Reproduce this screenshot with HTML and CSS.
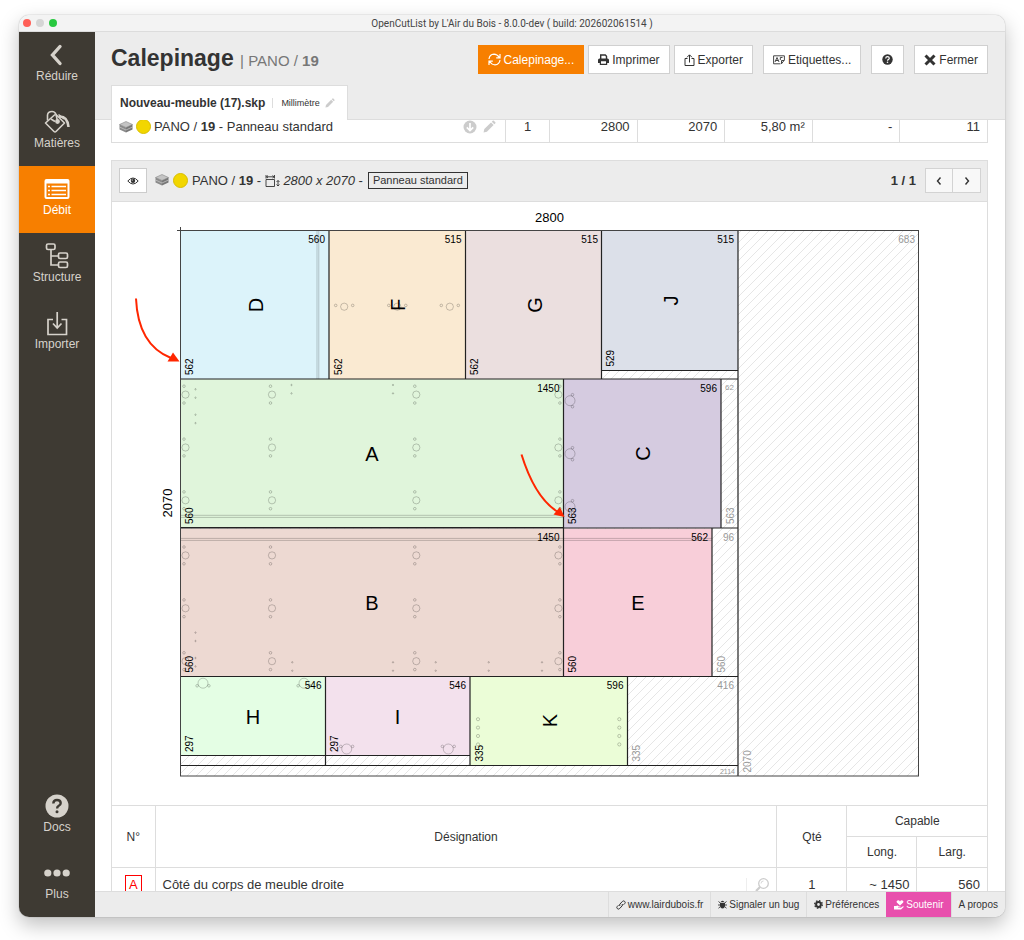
FILE: index.html
```html
<!DOCTYPE html>
<html lang="fr">
  <head>
    <meta charset="UTF-8">
    <meta name="viewport" content="width=device-width, initial-scale=1.0">
    <title>OpenCutList by L'Air du Bois</title>
    <link rel="stylesheet" href="styles.css">
  </head>
  <body>
    <!-- shared icons -->
    <svg class="sprite" aria-hidden="true">
      <symbol id="icon-board" viewBox="0 0 14 12">
        <path d="M7 0.500 13.500 3.500 7 6.500 0.500 3.500z" fill="#c4c4c4" stroke="#888" stroke-width="0.600"/>
        <path d="M0.500 3.500 7 6.500V11.500L0.500 8.500z" fill="#8a8a8a"/>
        <path d="M13.500 3.500 7 6.500V11.500L13.500 8.500z" fill="#777"/>
        <path d="M0.500 6 7 9 13.500 6" fill="none" stroke="#ccc" stroke-width="0.700"/>
      </symbol>
      <symbol id="icon-pencil" viewBox="0 0 12 12">
        <path d="M0.500 11.500 1.200 8.400 7.400 2.200 9.800 4.600 3.600 10.800zM8.100 1.500 9 0.600Q9.500 0.200 10 0.600L11.400 2Q11.800 2.500 11.400 3L10.500 3.900z" fill="currentColor"/>
      </symbol>
    </svg>

    <div class="window">
      <div class="titlebar">
        <div class="lights"><span class="red"></span><span class="grey"></span><span class="green"></span></div>
        <span class="titlebar-text">OpenCutList by L'Air du Bois - 8.0.0-dev ( build: 202602061514 )</span>
      </div>

      <div class="app">
        <nav class="sidebar">
          <a class="nav-item" href="#reduire">
            <svg width="26" height="26" viewBox="0 0 26 26"><path d="M16 4.500 8.500 13l7.500 8.500" fill="none" stroke="currentColor" stroke-width="3.400" stroke-linecap="round"/></svg>
            <span>Réduire</span>
          </a>
          <a class="nav-item" href="#matieres">
            <svg width="26" height="26" viewBox="0 0 26 26" fill="none" stroke="currentColor" stroke-width="1.600" stroke-linejoin="round">
              <path d="M11 5.500 1.500 14 10 22.500Q11 23.500 12 22.500L20.500 14 12 5.500"/>
              <path d="M3.500 11.500V6Q4 2.500 8 2.500 11 2.500 12 5.500L13.500 12"/>
              <path d="M7 10 11 12.500" />
              <circle cx="13.500" cy="12.500" r="1.600" fill="currentColor"/>
              <path d="M15 7.500Q23.500 7 24.500 18" stroke-width="2.600"/>
              <path d="M14.500 5.500 20 10"/>
            </svg>
            <span>Matières</span>
          </a>
          <a class="nav-item active" href="#debit">
            <svg width="26" height="26" viewBox="0 0 26 26">
              <path fill="currentColor" fill-rule="evenodd" d="M2.500 3h21Q25.500 3 25.500 5v16q0 2-2 2h-21q-2 0-2-2V5Q0.500 3 2.500 3zM2.500 7.500v13.500h21V7.500z"/>
              <path stroke="currentColor" stroke-width="1.600" d="M4 10.500h2M7.500 10.500h14.500M4 14.500h2M7.500 14.500h14.500M4 18.500h2M7.500 18.500h14.500"/>
            </svg>
            <span>Débit</span>
          </a>
          <a class="nav-item" href="#structure">
            <svg width="26" height="26" viewBox="0 0 26 26" fill="none" stroke="currentColor" stroke-width="1.700">
              <rect x="2.500" y="1" width="8.500" height="5.500" rx="1.500"/>
              <rect x="14.500" y="10" width="9" height="5.500" rx="1.500"/>
              <rect x="14.500" y="19" width="9" height="5.500" rx="1.500"/>
              <path d="M7 6.500V22h7.500M7 13h7.500"/>
            </svg>
            <span>Structure</span>
          </a>
          <a class="nav-item" href="#importer">
            <svg width="26" height="26" viewBox="0 0 26 26" fill="none" stroke="currentColor" stroke-width="1.700">
              <path d="M9 9.500H4V24.500H22.500V9.500H17.500M13.200 2V18M9 13.500 13.200 18 17.500 13.500"/>
            </svg>
            <span>Importer</span>
          </a>
          <div class="spacer"></div>
          <a class="nav-item" href="#docs">
            <svg width="26" height="26" viewBox="0 0 26 26">
              <circle cx="13" cy="13" r="11.500" fill="currentColor"/>
              <path d="M9.300 10.500Q9.500 7 13 7T16.700 10Q16.700 11.800 14.800 12.800 13.100 13.700 13.100 15.500" fill="none" stroke="#3e3a33" stroke-width="2.400"/>
              <circle cx="13" cy="18.800" r="1.500" fill="#3e3a33"/>
            </svg>
            <span>Docs</span>
          </a>
          <a class="nav-item" href="#plus">
            <svg width="26" height="26" viewBox="0 0 26 26" fill="currentColor"><circle cx="3.800" cy="13" r="3.600"/><circle cx="13" cy="13" r="3.600"/><circle cx="22.200" cy="13" r="3.600"/></svg>
            <span>Plus</span>
          </a>
        </nav>

        <div class="page">
          <header class="header">
            <div class="header-row">
              <h1>Calepinage <small>| PANO / <b>19</b></small></h1>
              <div class="toolbar">
                <button type="button" class="btn btn-primary">
                  <svg width="13" height="13" viewBox="0 0 13 13" fill="none" stroke="currentColor" stroke-width="1.200"><path d="M1 6Q1.500 1.500 6 1.200 9 1.200 11.500 4.500M12 1V4.800H8.200M12 7Q11.500 11.500 7 11.800 4 11.800 1.500 8.500M1 12V8.200H4.800"/></svg>
                  Calepinage...
                </button>
                <button type="button" class="btn">
                  <svg width="11" height="11" viewBox="0 0 11 11"><path fill="none" stroke="currentColor" stroke-width="1.400" d="M2.700 5V1H7.300L8.500 2.200V5"/><path fill="currentColor" fill-rule="evenodd" d="M1.500 4.500h8Q11 4.500 11 6v3H9.200v2H1.800V9H0V6Q0 4.500 1.500 4.500zM3 7.300V9.800H8V7.300z"/></svg>
                  Imprimer
                </button>
                <button type="button" class="btn">
                  <svg width="11" height="12" viewBox="0 0 11 12" fill="none" stroke="currentColor"><path d="M3.500 4.500H1V11.500H10V4.500H7.500M5.500 8.500V1M3 3.300 5.500 0.800 8 3.300"/></svg>
                  Exporter
                </button>
                <button type="button" class="btn gap-left">
                  <svg width="12" height="10" viewBox="0 0 12 10" fill="none" stroke="currentColor" stroke-width="0.900"><path d="M7.500 8.800H0.600V0.800H11.400V5L8.500 8.800V5.500H11.200M2 7 4 2.500 6 7M2.700 5.500H5.300M7.300 5V2.500H9.500"/></svg>
                  Etiquettes...
                </button>
                <button type="button" class="btn btn-help gap-left" aria-label="Aide">
                  <svg width="11" height="11" viewBox="0 0 11 11"><circle cx="5.500" cy="5.500" r="5.200" fill="currentColor"/><path d="M3.700 4.500Q3.800 2.700 5.500 2.700T7.300 4.200Q7.300 5 6.200 5.600 5.500 6 5.500 6.800" fill="none" stroke="#fff" stroke-width="1.200"/><circle cx="5.500" cy="8.300" r="0.800" fill="#fff"/></svg>
                </button>
                <button type="button" class="btn gap-left">
                  <svg width="12" height="12" viewBox="0 0 12 12"><path d="M1.500 1.500 10.500 10.500M10.500 1.500 1.500 10.500" stroke="currentColor" stroke-width="3"/></svg>
                  Fermer
                </button>
              </div>
            </div>
            <div class="file-tab">
              <b>Nouveau-meuble (17).skp</b>
              <span class="unit">Millimètre <svg class="faded" width="10" height="10"><use href="#icon-pencil"/></svg></span>
            </div>
          </header>

          <main class="content">
            <table class="summary">
              <tr>
                <td class="material">
                  <div class="cell-row">
                    <svg width="14" height="12"><use href="#icon-board"/></svg>
                    <span class="swatch"></span>
                    <span>PANO / <b>19</b> - Panneau standard</span>
                    <svg class="faded push" width="14" height="14" viewBox="0 0 14 14"><circle cx="7" cy="7" r="6.500" fill="currentColor"/><path d="M7 3V10.500M3.800 7.300 7 10.500 10.200 7.300" fill="none" stroke="#fff" stroke-width="1.700"/></svg>
                    <svg class="faded pencil" width="13" height="13"><use href="#icon-pencil"/></svg>
                  </div>
                </td>
                <td class="qty">1</td>
                <td>2800</td>
                <td>2070</td>
                <td>5,80 m²</td>
                <td>-</td>
                <td>11</td>
              </tr>
            </table>

            <section class="panel">
              <div class="panel-head">
                <button type="button" class="btn-eye" aria-label="Afficher">
                  <svg width="12" height="8" viewBox="0 0 12 8"><path d="M0.800 4Q6-2 11.200 4 6 10 0.800 4z" fill="none" stroke="currentColor"/><circle cx="6" cy="3.700" r="2.200" fill="currentColor"/><circle cx="5.300" cy="3" r="0.600" fill="#fff"/></svg>
                </button>
                <svg width="14" height="12"><use href="#icon-board"/></svg>
                <span class="swatch"></span>
                <span class="panel-title">PANO / <b>19</b> -
                  <svg width="15" height="12" viewBox="0 0 15 12" fill="none" stroke="currentColor"><path d="M1 4.500H9.500V11.500H1zM1 0V3.500M9.500 0V3.500M1.500 1.800H9M3 0.500 1.500 1.800 3 3M7.500 0.500 9 1.800 7.500 3M13 5.500V11M11.500 7 13 5.500 14.500 7M11.500 9.500 13 11 14.500 9.500" stroke-width="0.900"/></svg>
                  <i>2800 x 2070</i> -</span>
                <span class="tag">Panneau standard</span>
                <b class="pager-text">1 / 1</b>
                <div class="pager">
                  <button type="button" aria-label="Précédent"><svg width="6" height="8" viewBox="0 0 6 8"><path d="M4.500 0.500 1.500 4l3 3.500" fill="none" stroke="currentColor" stroke-width="1.400"/></svg></button>
                  <button type="button" aria-label="Suivant"><svg width="6" height="8" viewBox="0 0 6 8"><path d="M1.500 0.500 4.500 4l-3 3.500" fill="none" stroke="currentColor" stroke-width="1.400"/></svg></button>
                </div>
              </div>

              <svg class="cutting" viewBox="112 202 875 603">
                <defs>
                  <pattern id="hatch" width="9" height="9" patternUnits="userSpaceOnUse">
                    <path d="M-1 10 10-1M-1 1 1-1M8 10 10 8" stroke="#e0e0e0" stroke-width="0.800"/>
                  </pattern>
                  <g id="cam"><circle r="3.600"/><circle cx="-1.500" cy="-8.400" r="1.300"/><circle cx="-1.500" cy="8.400" r="1.300"/></g>
                  <g id="cam-r"><circle r="3.600"/><circle cx="1.500" cy="-8.400" r="1.300"/><circle cx="1.500" cy="8.400" r="1.300"/></g>
                  <g id="cam-h"><circle r="3.600"/><circle cx="-8.500" cy="-1.300" r="1.300"/><circle cx="8.500" cy="-1.300" r="1.300"/></g>
                  <g id="hinge"><circle r="5"/><circle cx="2.500" cy="-6" r="1.300"/><circle cx="2.500" cy="6" r="1.300"/></g>
                  <g id="hinge-down"><circle r="5"/><circle cx="-5.900" cy="2.600" r="1.300"/><circle cx="5.900" cy="2.600" r="1.300"/></g>
                  <g id="hinge-up"><circle r="5"/><circle cx="-5.900" cy="-2.600" r="1.300"/><circle cx="5.900" cy="-2.600" r="1.300"/></g>
                  <g id="pin"><circle r="0.700"/><circle cy="8.400" r="0.700"/></g>
                  <g id="shelf"><circle r="1.600"/><circle cy="8.400" r="1.600"/><circle cy="16.800" r="1.600"/><circle cy="25.200" r="1.600"/></g>
                </defs>

                <!-- sheet and leftovers -->
                <rect class="sheet" x="180.500" y="230.500" width="738" height="545.500"/>

                <!-- parts -->
                <g class="parts">
                  <rect x="180.500" y="230.500" width="148.500" height="148.500" fill="#dcf3fa"/>
                  <rect x="329" y="230.500" width="136.500" height="148.500" fill="#faead2"/>
                  <rect x="465.500" y="230.500" width="136" height="148.500" fill="#ebdfdf"/>
                  <rect x="601.500" y="230.500" width="136.500" height="140" fill="#dce0e9"/>
                  <rect x="180.500" y="379" width="383" height="148.500" fill="#e0f5db"/>
                  <rect x="563.500" y="379" width="157.500" height="149" fill="#d5cbe0"/>
                  <rect x="180.500" y="528.500" width="383" height="148" fill="#edd9d2"/>
                  <rect x="563.500" y="528.500" width="148.500" height="148" fill="#f8ced9"/>
                  <rect x="180.500" y="676.500" width="145" height="79" fill="#e4fee4"/>
                  <rect x="325.500" y="676.500" width="144.500" height="79" fill="#f3e1ed"/>
                  <rect x="470" y="676.500" width="157.500" height="89" fill="#ebfdd7"/>
                </g>

                <!-- grooves and drillings -->
                <g class="drill">
                  <path d="M317 231V379M318.800 231V379M181 515.300H563M181 517.400H563M181 538.400H712M181 540.400H712"/>
                  <use href="#cam-h" x="344.200" y="306.700"/><use href="#cam-h" x="397.300" y="306.700"/><use href="#cam-h" x="449.800" y="306.700"/>
                  <use href="#cam" x="185.500" y="394.600"/><use href="#cam" x="185.500" y="447.500"/><use href="#cam" x="185.500" y="500.300"/>
                  <use href="#cam" x="272" y="394.600"/><use href="#cam" x="272" y="447.500"/><use href="#cam" x="272" y="500.300"/>
                  <use href="#cam" x="416.300" y="394.600"/><use href="#cam" x="416.300" y="447.500"/><use href="#cam" x="416.300" y="500.300"/>
                  <use href="#cam-r" x="558.400" y="394.600"/><use href="#cam-r" x="558.400" y="447.500"/><use href="#cam-r" x="558.400" y="500.300"/>
                  <use href="#cam" x="185.500" y="555.400"/><use href="#cam" x="185.500" y="608.300"/><use href="#cam" x="185.500" y="661.200"/>
                  <use href="#cam" x="272" y="555.400"/><use href="#cam" x="272" y="608.300"/><use href="#cam" x="272" y="661.200"/>
                  <use href="#cam" x="416.300" y="555.400"/><use href="#cam" x="416.300" y="608.300"/><use href="#cam" x="416.300" y="661.200"/>
                  <use href="#cam-r" x="558.400" y="555.400"/><use href="#cam-r" x="558.400" y="608.300"/><use href="#cam-r" x="558.400" y="661.200"/>
                  <use href="#hinge" x="570" y="400.700"/><use href="#hinge" x="570" y="453.700"/><use href="#hinge" x="570" y="506.700"/>
                  <use href="#hinge-down" x="203" y="683.200"/><use href="#hinge-down" x="304" y="683.200"/>
                  <use href="#hinge-up" x="346.700" y="749"/><use href="#hinge-up" x="448.300" y="749"/>
                  <use href="#shelf" x="478" y="719.200"/><use href="#shelf" x="619.300" y="719.200"/>
                  <use href="#pin" x="195.500" y="389.300"/><use href="#pin" x="195.500" y="414.700"/>
                  <use href="#pin" x="291.500" y="385"/><use href="#pin" x="393" y="385"/>
                  <use href="#pin" x="195.500" y="632.600"/><use href="#pin" x="195.500" y="658"/>
                  <use href="#pin" x="292.300" y="662.300"/><use href="#pin" x="393" y="662.300"/>
                  <use href="#pin" x="435.700" y="662.300"/><use href="#pin" x="488.700" y="662.300"/><use href="#pin" x="542" y="662.300"/>
                </g>

                <!-- saw cuts -->
                <g class="cuts">
                  <path d="M180.500 379H738M180.500 528H738M180.500 676.500H738M180.500 765.500H738M738 230.500V776"/>
                  <path d="M329 230.500V379M465.500 230.500V379M601.500 230.500V379M601.500 370.500H738M563.500 379V676.500M721 379V528M712 528V676.500"/>
                  <path d="M180.500 755.500H470M325.500 676.500V765.500M470 676.500V765.500M627.500 676.500V765.500"/>
                  <path d="M180.500 527.500H563.500"/>
                </g>
                <rect class="outline" x="180.500" y="230.500" width="738" height="545.500"/>
                <path class="outline" d="M177 230.500H184M180.500 227V234"/>

                <g class="dim-main">
                  <text x="549.500" y="221.500">2800</text>
                  <text transform="translate(172 503) rotate(-90)">2070</text>
                </g>

                <g class="letter">
                  <text transform="translate(263 305) rotate(-90)">D</text>
                  <text transform="translate(404.500 305) rotate(-90)">F</text>
                  <text transform="translate(541.500 305) rotate(-90)">G</text>
                  <text transform="translate(678 300.500) rotate(-90)">J</text>
                  <text x="372" y="461">A</text>
                  <text transform="translate(650 453.500) rotate(-90)">C</text>
                  <text x="372" y="610">B</text>
                  <text x="638" y="610">E</text>
                  <text x="253" y="723.500">H</text>
                  <text x="397.500" y="723.500">I</text>
                  <text transform="translate(557 720.500) rotate(-90)">K</text>
                </g>

                <g class="dim-x">
                  <text x="325" y="243">560</text>
                  <text x="461.500" y="243">515</text>
                  <text x="598" y="243">515</text>
                  <text x="734" y="243">515</text>
                  <text x="559.500" y="392">1450</text>
                  <text x="717" y="392">596</text>
                  <text x="559.500" y="541">1450</text>
                  <text x="708" y="541">562</text>
                  <text x="321.500" y="689">546</text>
                  <text x="466" y="689">546</text>
                  <text x="623.500" y="689">596</text>
                  <text class="rest" x="915" y="243">683</text>
                  <text class="rest small" x="734" y="390">62</text>
                  <text class="rest" x="734" y="541">96</text>
                  <text class="rest" x="734" y="689">416</text>
                  <text class="rest tiny" x="735" y="774">2114</text>
                </g>

                <g class="dim-y">
                  <text transform="translate(193 375) rotate(-90)">562</text>
                  <text transform="translate(341.500 375) rotate(-90)">562</text>
                  <text transform="translate(478 375) rotate(-90)">562</text>
                  <text transform="translate(614 366.500) rotate(-90)">529</text>
                  <text transform="translate(193 524) rotate(-90)">560</text>
                  <text transform="translate(576 524) rotate(-90)">563</text>
                  <text transform="translate(193 672.500) rotate(-90)">560</text>
                  <text transform="translate(576 672.500) rotate(-90)">560</text>
                  <text transform="translate(193 752) rotate(-90)">297</text>
                  <text transform="translate(338 752) rotate(-90)">297</text>
                  <text transform="translate(482.500 761.500) rotate(-90)">335</text>
                  <text class="rest" transform="translate(733.500 524) rotate(-90)">563</text>
                  <text class="rest" transform="translate(724.500 672.500) rotate(-90)">560</text>
                  <text class="rest" transform="translate(640 761.500) rotate(-90)">335</text>
                  <text class="rest" transform="translate(751 772.500) rotate(-90)">2070</text>
                </g>

                <!-- annotations -->
                <g class="arrow">
                  <path d="M136 298.500Q138 345 171 358"/>
                  <path d="M179.500 361.500 167.500 361.500 173 352.500z"/>
                  <path d="M521.500 454.500Q535 498 558 512"/>
                  <path d="M564.500 517 553.500 514.500 560 507z"/>
                </g>
              </svg>

              <table class="parts-table">
                <colgroup><col class="c-num"><col><col class="c-cell"><col class="c-cell"><col class="c-cell"></colgroup>
                <thead>
                  <tr><th rowspan="2">N°</th><th rowspan="2">Désignation</th><th rowspan="2">Qté</th><th class="last" colspan="2">Capable</th></tr>
                  <tr><th>Long.</th><th class="last">Larg.</th></tr>
                </thead>
                <tbody>
                  <tr>
                    <td class="center"><span class="num">A</span></td>
                    <td>
                      <div class="cell-row">Côté du corps de meuble droite
                        <span class="search push"><svg width="14" height="14" viewBox="0 0 14 14" fill="none" stroke="currentColor"><circle cx="8.500" cy="5.500" r="4.800" stroke-width="1.300"/><path d="M6 5.500Q6 3 8.500 3" stroke-width="0.800"/><path d="M5 9 1 13" stroke-width="2.200"/></svg></span>
                      </div>
                    </td>
                    <td class="center">1</td>
                    <td class="right">~ 1450</td>
                    <td class="right last">560</td>
                  </tr>
                </tbody>
              </table>
            </section>
          </main>

          <footer class="footer">
            <a href="#site"><svg width="10" height="10" viewBox="0 0 10 10" fill="none" stroke="currentColor"><path d="M4 6Q3 5 4 4L6.300 1.500Q7.500 0.300 8.700 1.400 9.800 2.500 8.700 3.600L7.500 4.800M6 4Q7 5 6 6L3.700 8.500Q2.500 9.700 1.300 8.600 0.200 7.500 1.300 6.400L2.500 5.200"/></svg> www.lairdubois.fr</a>
            <a href="#bug"><svg width="9" height="9" viewBox="0 0 9 9"><path d="M2.700 2Q4.500-0.600 6.300 2zM2 2.700H7V6Q6.500 8.500 4.500 8.500T2 6z" fill="currentColor"/><path d="M0.500 1.500 2.500 3.200M8.500 1.500 6.500 3.200M0 5H9M0.500 8.200 2.500 6.500M8.500 8.200 6.500 6.500" stroke="currentColor" stroke-width="0.900"/></svg> Signaler un bug</a>
            <a href="#preferences"><svg width="9" height="9" viewBox="0 0 9 9"><circle cx="4.500" cy="4.500" r="2.400" fill="none" stroke="currentColor" stroke-width="2"/><circle cx="4.500" cy="4.500" r="3.800" fill="none" stroke="currentColor" stroke-width="1.400" stroke-dasharray="1.500 1.480"/></svg> Préférences</a>
            <a href="#soutenir" class="support"><svg width="10" height="10" viewBox="0 0 10 10" fill="currentColor"><path d="M6 5.500 2.800 2.600Q2 1 3.500 0.400 5.200 0 6 1.600 6.800 0 8.500 0.400 10 1 9.200 2.600zM0 6H2L3.500 5.500 5 6.500H6.500V7.500H4V8H6.500L9 6.200Q10 6.200 9.700 7L7 9.500H0z"/></svg> Soutenir</a>
            <a href="#apropos">A propos</a>
          </footer>
        </div>
      </div>
    </div>
  </body>
</html>
```
FILE: styles.css
```css
* {
  box-sizing: border-box;
}

body {
  margin: 0;
  padding: 15px 19px 23px;
  height: 100vh;
  background: #fff;
  color: #333;
  font-family: "Liberation Sans", Arial, sans-serif;
  font-size: 13px;
  overflow: hidden;
}

a {
  color: inherit;
  text-decoration: none;
}

button {
  font-family: inherit;
  color: inherit;
  cursor: pointer;
}

svg {
  flex: none;
}

.sprite {
  position: absolute;
  width: 0;
  height: 0;
}

.window {
  height: 100%;
  display: flex;
  flex-direction: column;
  border-radius: 10px;
  overflow: hidden;
  background: #fff;
  box-shadow: 0 0 1px rgba(0, 0, 0, 0.5), 0 8px 20px rgba(0, 0, 0, 0.25);
}

.titlebar {
  flex: none;
  display: flex;
  align-items: center;
  height: 17px;
  padding: 0 4px;
  background: #f3f3f3;
  border-bottom: 1px solid #dcdcdc;
}

.lights {
  display: flex;
  gap: 5px;
  width: 60px;
}

.lights span {
  width: 8px;
  height: 8px;
  border-radius: 50%;
}

.red { background: #ff5f57; }
.grey { background: #d5d5d5; }
.green { background: #28c840; }

.titlebar-text {
  flex: 1;
  padding-right: 60px;
  text-align: center;
  font-family: Roboto, sans-serif;
  font-size: 10px;
  color: #444;
}

.app {
  flex: 1;
  display: flex;
  min-height: 0;
}

/* sidebar */
.sidebar {
  flex: none;
  width: 76px;
  display: flex;
  flex-direction: column;
  background: #3e3a33;
  color: #d6d2cb;
}

.nav-item {
  height: 67px;
  display: flex;
  flex-direction: column;
  align-items: center;
  padding-top: 10px;
  font-size: 12px;
  line-height: 16px;
}

.nav-item.active {
  background: #f77f00;
  color: #fff;
}

.spacer {
  flex: 1;
}

.page {
  flex: 1;
  min-width: 0;
  display: flex;
  flex-direction: column;
}

/* header */
.header {
  position: relative;
  z-index: 1;
  flex: none;
  height: 88px;
  display: flex;
  flex-direction: column;
  justify-content: space-between;
  padding: 12px 17px 0 16px;
  background: #ececec;
  border-bottom: 1px solid #ddd;
}

.header-row {
  display: flex;
  justify-content: space-between;
  align-items: center;
}

h1 {
  margin: 0;
  font-size: 23px;
  line-height: 29px;
}

h1 small {
  font-size: 15px;
  font-weight: normal;
  color: #777;
}

.toolbar {
  display: flex;
  gap: 4px;
}

.btn {
  display: flex;
  align-items: center;
  gap: 3px;
  height: 29px;
  padding: 0 9px;
  background: #fff;
  border: 1px solid #d0d0d0;
  font-size: 12px;
}

.btn-primary {
  background: #f77f00;
  border-color: #f77f00;
  color: #fff;
}

.btn-help {
  padding: 0 10px;
}

.gap-left {
  margin-left: 6px;
}

.file-tab {
  align-self: flex-start;
  display: flex;
  align-items: center;
  height: 35px;
  margin-bottom: -1px;
  padding: 0 12px 0 8px;
  background: #fff;
  border: 1px solid #ddd;
  border-bottom: none;
  font-size: 12px;
}

.unit {
  display: flex;
  align-items: center;
  gap: 5px;
  margin-left: 7px;
  padding-left: 8px;
  border-left: 1px solid #ddd;
  font-size: 9px;
}

.faded {
  color: #ccc;
}

.push {
  margin-left: auto;
}

/* content */
.content {
  flex: 1;
  min-height: 0;
  overflow: hidden;
  padding: 0 17px 0 16px;
}

table {
  width: 100%;
  border-collapse: collapse;
  table-layout: fixed;
}

.summary {
  margin-top: -10px;
}

.summary td {
  width: 10%;
  height: 32px;
  padding: 0 7px;
  border: 1px solid #ddd;
  text-align: right;
}

.summary .material {
  width: 45%;
}

.summary .qty {
  width: 5%;
  text-align: center;
}

.cell-row {
  display: flex;
  align-items: center;
  gap: 3px;
}

.pencil {
  margin: 0 2px 0 3px;
}

.swatch {
  flex: none;
  width: 15px;
  height: 15px;
  border: 1px solid #d8be00;
  border-radius: 50%;
  background: #f2d600;
}

.panel {
  margin-top: 17px;
  border: 1px solid #ddd;
}

.panel-head {
  display: flex;
  align-items: center;
  gap: 4px;
  height: 41px;
  padding: 0 6px 2px 7px;
  background: #ececec;
  border-bottom: 1px solid #ddd;
}

.btn-eye {
  width: 28px;
  height: 25px;
  margin-right: 4px;
  padding: 0;
  background: #fff;
  border: 1px solid #ccc;
}

.panel-title svg {
  vertical-align: -2px;
}

.tag {
  padding: 0 4px;
  border: 1px solid #333;
  margin-left: 1px;
  font-size: 11px;
  line-height: 15px;
}

.pager-text {
  margin-left: auto;
  margin-right: 5px;
}

.pager {
  display: flex;
}

.pager button {
  width: 28px;
  height: 25px;
  padding: 0;
  background: #f8f8f8;
  border: 1px solid #d3d3d3;
}

.pager button + button {
  border-left: none;
}

/* cutting diagram */
.cutting {
  display: block;
  width: 100%;
}

.sheet {
  fill: url(#hatch);
}

.outline {
  fill: none;
  stroke: #444;
}

.cuts {
  fill: none;
  stroke: #222;
  stroke-width: 1.2px;
}

.drill {
  fill: none;
  stroke: #000;
  stroke-width: 0.7px;
  stroke-opacity: 0.3;
}

.dim-main {
  font-size: 13px;
  text-anchor: middle;
  fill: #000;
}

.letter {
  font-size: 20px;
  text-anchor: middle;
  fill: #000;
}

.dim-x,
.dim-y {
  font-size: 10px;
  fill: #000;
}

.dim-x {
  text-anchor: end;
}

.rest {
  fill: #999;
}

.small {
  font-size: 8px;
}

.tiny {
  font-size: 7px;
}

.arrow path {
  fill: none;
  stroke: #ff2600;
  stroke-width: 2px;
}

.arrow path:nth-child(even) {
  fill: #ff2600;
  stroke: none;
}

/* parts list */
.c-num {
  width: 43px;
}

.c-cell {
  width: 70px;
}

.parts-table th,
.parts-table td {
  padding: 0 7px;
  border: 1px solid #ddd;
}

.parts-table th {
  height: 31px;
  font-size: 12px;
  font-weight: normal;
}

.parts-table td {
  height: 34px;
}

.parts-table thead tr:first-child > :first-child,
.parts-table td:first-child {
  border-left: none;
}

.parts-table .last {
  border-right: none;
}

.parts-table .center {
  text-align: center;
}

.parts-table .right {
  text-align: right;
}

.num {
  display: inline-block;
  width: 17px;
  border: 1px solid #f00;
  color: #f00;
  line-height: 17px;
}

.search {
  display: flex;
  padding-left: 8px;
  border-left: 1px solid #eee;
  color: #ccc;
}

/* footer */
.footer {
  flex: none;
  display: flex;
  justify-content: flex-end;
  height: 26px;
  background: #ececec;
  border-top: 1px solid #ddd;
  font-size: 10px;
}

.footer a {
  display: flex;
  align-items: center;
  gap: 2px;
  padding: 0 7px;
  border-left: 1px solid #ddd;
}

.footer .support {
  background: #e84fad;
  border-color: #e84fad;
  color: #fff;
}
```
